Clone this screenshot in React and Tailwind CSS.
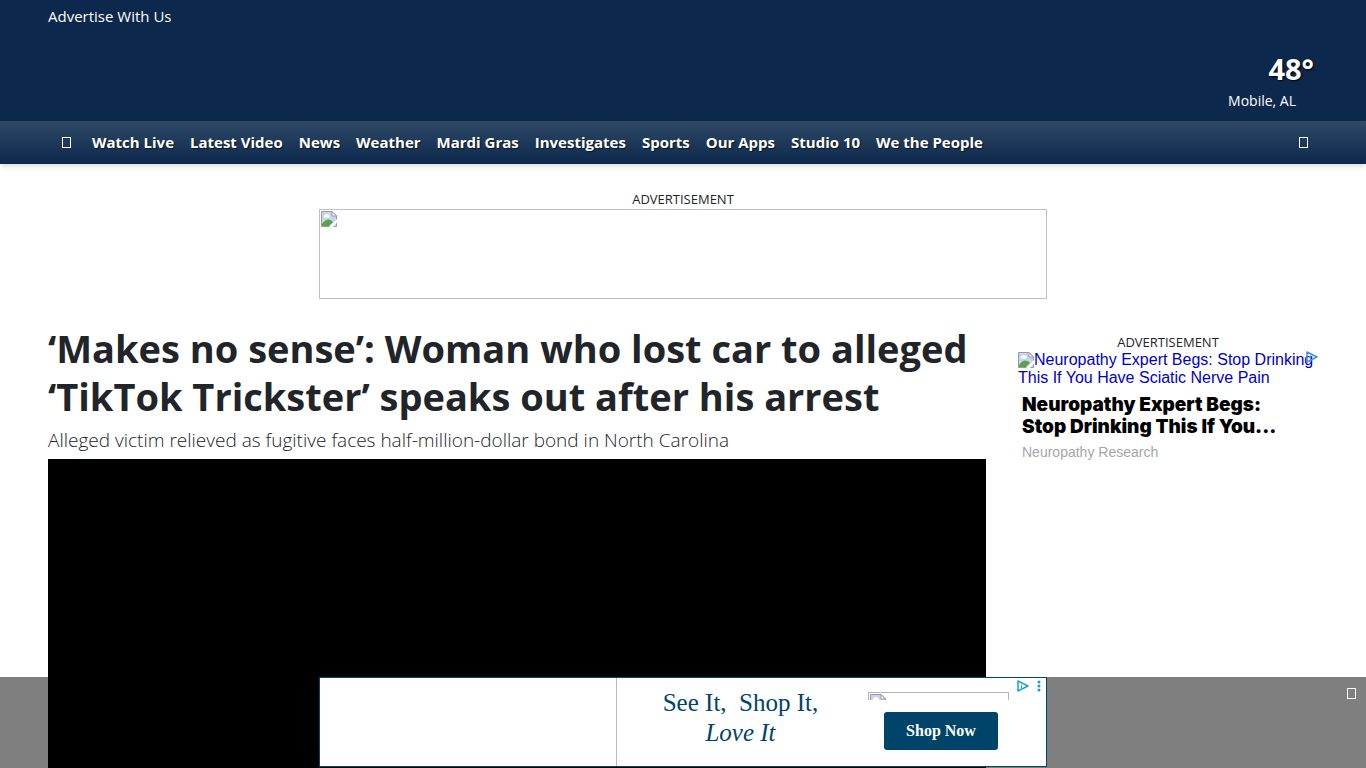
import React from "react";

const navItems = [
  "Watch Live",
  "Latest Video",
  "News",
  "Weather",
  "Mardi Gras",
  "Investigates",
  "Sports",
  "Our Apps",
  "Studio 10",
  "We the People",
];

function BrokenImage({ className }) {
  return (
    <svg className={className} width="16" height="16" viewBox="0 0 16 16" aria-hidden="true">
      <path d="M.5.5H11L15.500 5V15.500H.5Z" fill="#c6d3f4" stroke="#9a9a9a" />
      <path d="M3 6.500a1.500 1.500 0 0 1 1-2.500 2 2 0 0 1 3.500 0A1.300 1.300 0 0 1 8 6.500Z" fill="#fff" />
      <path d="M1 15V13Q4 8.500 7.500 8.500Q10 8.500 12 11L8 15Z" fill="#57a641" />
      <path d="M11 .5V5h4.500Z" fill="#fff" stroke="#9a9a9a" />
      <path d="M8 16L16 8V11.500L12 16Z" fill="#fff" />
    </svg>
  );
}

function AdChoices({ className }) {
  return (
    <svg className={className} width="12" height="12" viewBox="0 0 12 12" fill="none" aria-hidden="true">
      <path d="M1 1L11 6L1 11Z" stroke="currentColor" strokeWidth="1.500" strokeLinejoin="round" />
      <path d="M4.500 5.500V8.500M4.500 3.500V4.500" stroke="currentColor" strokeWidth="1.300" />
    </svg>
  );
}

function Glyph() {
  return <span className="block h-[11px] w-[9px] border border-white" />;
}

function Header() {
  return (
    <header className="text-white">
      <div className="bg-[#0c284c] px-12 pt-1 pb-[7px]">
        <a href="#advertise" className="inline-block text-[15px] leading-6">
          Advertise With Us
        </a>
        <div className="flex flex-col items-end pt-[23px]">
          <p className="pr-1 text-[29px] leading-9 font-bold [text-shadow:1px_1px_2px_#000]">48°</p>
          <p className="pr-[22px] text-sm leading-[27px]">Mobile, AL</p>
        </div>
      </div>
      <nav className="flex h-[43px] items-center bg-linear-to-b from-[#2f4966] to-[#0c284c] px-12 shadow-md">
        <button aria-label="Home" className="mr-[21px] ml-[14px]">
          <Glyph />
        </button>
        <ul className="flex flex-1 gap-4 text-[15px] font-bold whitespace-nowrap [text-shadow:1px_1px_1px_#0009]">
          {navItems.map((item) => (
            <li key={item}>
              <a href="#nav">{item}</a>
            </li>
          ))}
        </ul>
        <button aria-label="Search" className="mr-[10px]">
          <Glyph />
        </button>
      </nav>
    </header>
  );
}

function SideAd() {
  return (
    <aside className="w-[300px] shrink-0 pt-[9px]">
      <p className="text-center text-[13px] leading-[18px]">ADVERTISEMENT</p>
      <div className="relative font-['Liberation_Sans',sans-serif]">
        <a href="#ad" className="block text-base leading-[18px] text-[#0000cc]">
          <BrokenImage className="inline-block align-text-bottom" />
          Neuropathy Expert Begs: Stop Drinking This If You Have Sciatic Nerve Pain
        </a>
        <AdChoices className="absolute top-0 right-0 text-[#4a8fe0]" />
        <div className="px-1 pt-[7px]">
          <h2 className="pr-6 font-['Inter',sans-serif] text-[19px] leading-[22px] font-black text-black">
            Neuropathy Expert Begs: Stop Drinking This If You...
          </h2>
          <p className="mt-1 text-sm leading-5 text-[#a6a6a6]">Neuropathy Research</p>
        </div>
      </div>
    </aside>
  );
}

function BottomAd() {
  return (
    <div className="fixed inset-x-0 bottom-0 flex h-[91px] items-start justify-center bg-black/50">
      <div className="relative flex h-[90px] w-[728px] border border-[#00446a] bg-white font-['Liberation_Serif',serif] text-[#00446a]">
        <div className="w-[297px] border-r border-[#bbb]" />
        <p className="flex-1 pt-[10px] pr-1 text-center text-[25px] leading-[30px] whitespace-pre">
          {"See It,  Shop It,"}
          <br />
          <em>Love It</em>
        </p>
        <div className="flex w-[178px] flex-col pt-[14px]">
          <div className="h-2 w-[141px] overflow-hidden border border-b-0 border-[#b5b5b5]">
            <BrokenImage className="m-px" />
          </div>
          <button className="mt-3 ml-4 h-[38px] w-[114px] rounded-[3px] bg-[#00446a] text-base font-bold text-white">
            Shop Now
          </button>
        </div>
        <div className="absolute top-[2px] right-[5px] flex items-center gap-2 text-[#12a5c9]">
          <AdChoices />
          <svg width="4" height="12" viewBox="0 0 4 12" fill="currentColor" aria-hidden="true">
            <circle cx="2" cy="2" r="1.500" />
            <circle cx="2" cy="6" r="1.500" />
            <circle cx="2" cy="10" r="1.500" />
          </svg>
        </div>
      </div>
      <button aria-label="Close" className="absolute top-[11px] right-[10px]">
        <Glyph />
      </button>
    </div>
  );
}

function App() {
  return (
    <div className="bg-white font-['Open_Sans',sans-serif] text-[#212529]">
      <Header />
      <div className="flex flex-col items-center pt-[26px]">
        <p className="text-[13px] leading-[19px]">ADVERTISEMENT</p>
        <div className="h-[90px] w-[728px] border border-[#c0c0c0] p-px">
          <BrokenImage />
        </div>
      </div>
      <div className="flex gap-8 px-12 pt-[25px]">
        <main className="min-w-0 flex-1">
          <h1 className="text-[38px] leading-[48px] font-bold">
            ‘Makes no sense’: Woman who lost car to alleged ‘TikTok Trickster’ speaks out after his arrest
          </h1>
          <p className="mt-[5px] mb-1 text-[19px] leading-[30px] font-light">
            Alleged victim relieved as fugitive faces half-million-dollar bond in North Carolina
          </p>
          <div className="aspect-video bg-black" />
        </main>
        <SideAd />
      </div>
      <BottomAd />
    </div>
  );
}

export default App;
